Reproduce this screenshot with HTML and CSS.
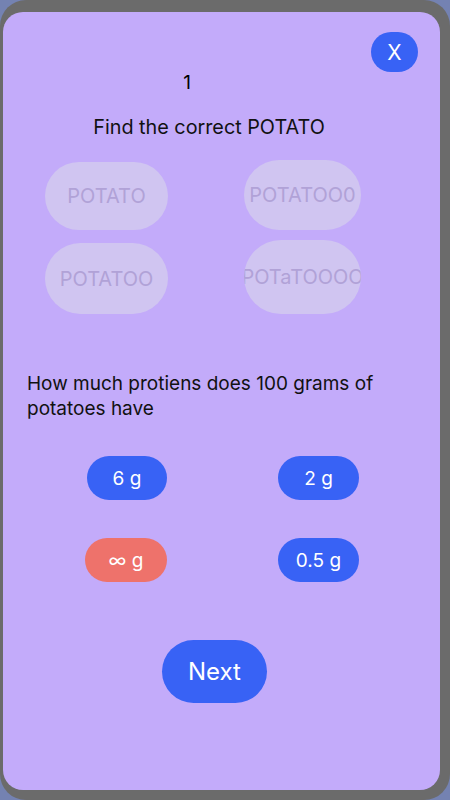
FILE: index.html
```html
<!DOCTYPE html>
<html lang="en">
<head>
    <meta charset="UTF-8">
    <meta name="viewport" content="width=device-width, initial-scale=1.0">
    <title>Potato Quiz</title>
    <link rel="stylesheet" href="styles.css">
</head>
<body>

<div class="frame">
    <div class="card">
        <div class="header">
            <button class="close-btn">X</button>
        </div>

        <p class="step">1</p>
        <p class="title">Find the correct POTATO</p>

        <div class="choices">
            <button class="pill">POTATO</button>
            <button class="pill pill-right">POTATOO0</button>
            <button class="pill pill-tall">POTATOO</button>
            <button class="pill pill-right pill-tall">POTaTOOOO</button>
        </div>

        <p class="question">How much protiens does 100 grams of potatoes have</p>

        <div class="answers">
            <button class="answer">6 g</button>
            <button class="answer">2 g</button>
            <button class="answer wrong">∞ g</button>
            <button class="answer">0.5 g</button>
        </div>

        <div class="footer">
            <button class="next-btn">Next</button>
        </div>
    </div>
</div>

</body>
</html>
```

FILE: styles.css
```css
body {
    margin: 0;
    background-color: #7482b2;
    font-family: Inter, "Noto Sans", sans-serif;
}
.frame {
    width: 450px;
    height: 800px;
    box-sizing: border-box;
    padding: 12px 10px 10px 3px;
    background-color: #6b6b6b;
    border-radius: 26px;
}
.card {
    height: 100%;
    box-sizing: border-box;
    padding: 20px 22px 0 24px;
    background-color: #c3abfa;
    border-radius: 20px;
}
button {
    font-family: inherit;
    border: none;
    cursor: pointer;
}
.header {
    display: flex;
    justify-content: flex-end;
}
.close-btn {
    width: 47px;
    height: 40px;
    border-radius: 20px;
    background-color: #3862f5;
    color: #fff;
    font-size: 21px;
    padding: 0;
}
.step {
    margin: 0;
    padding-right: 71px;
    text-align: center;
    font-size: 19px;
    line-height: 22px;
    color: #000;
}
.title {
    margin: 22px 0 0;
    padding-right: 27px;
    text-align: center;
    font-size: 19.8px;
    line-height: 22px;
    color: #111;
}
.choices {
    display: grid;
    grid-template-columns: 123px 117px;
    column-gap: 76px;
    row-gap: 10px;
    align-items: end;
    margin: 22px 0 0 18px;
}
.pill {
    height: 68px;
    border-radius: 34px;
    background-color: #d0c5f1;
    color: #b1a2d7;
    font-size: 20px;
    padding: 0;
    overflow: hidden;
    white-space: nowrap;
    display: flex;
    align-items: center;
    justify-content: center;
}
.pill-right {
    height: 70px;
    border-radius: 35px;
}
.pill-tall {
    height: 71px;
    border-radius: 36px;
}
.pill-right.pill-tall {
    height: 74px;
    border-radius: 37px;
}
.question {
    margin: 57px 0 0;
    padding-right: 20px;
    font-size: 19px;
    line-height: 25px;
    color: #111;
}
.answers {
    display: grid;
    grid-template-columns: 80px 81px;
    column-gap: 111px;
    row-gap: 38px;
    margin: 35px 0 0 60px;
}
.answer {
    height: 44px;
    border-radius: 22px;
    background-color: #3862f5;
    color: #fff;
    font-size: 19px;
    padding: 0;
}
.answer.wrong {
    background-color: #ee726b;
    margin-left: -2px;
}
.footer {
    display: flex;
    justify-content: center;
    padding-right: 16px;
    margin-top: 58px;
}
.next-btn {
    width: 105px;
    height: 63px;
    border-radius: 32px;
    background-color: #3862f5;
    color: #fff;
    font-size: 24px;
    padding: 0;
}
```
